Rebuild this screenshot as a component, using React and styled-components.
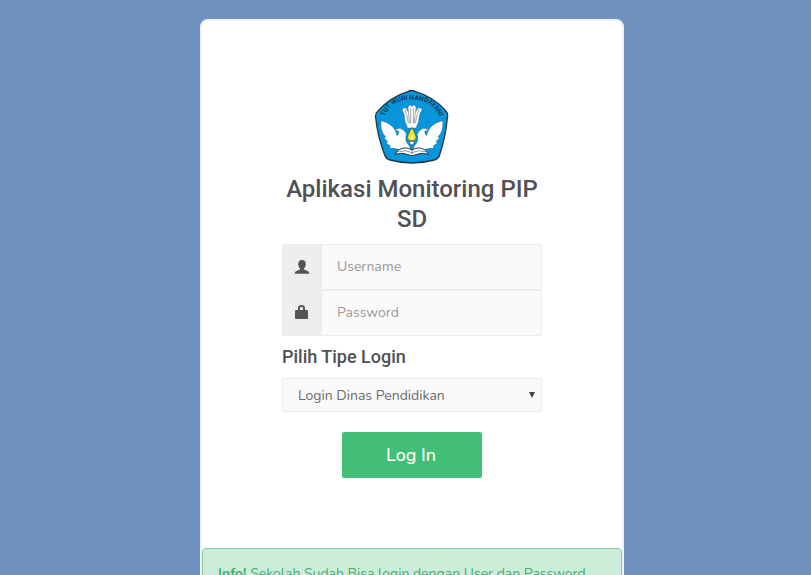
import React, { useState } from 'react';
import styled, { createGlobalStyle } from 'styled-components';

const GlobalStyle = createGlobalStyle`
  * {
    box-sizing: border-box;
  }

  body {
    margin: 0;
    background-color: #7092be;
    color: #4f5155;
    font-family: Nunito, Lato, "Open Sans", sans-serif;
    font-size: 14px;
  }
`;

const Page = styled.main`
  height: 100vh;
  overflow: hidden;
  padding: 19px 0 0 13px;
`;

const Card = styled.div`
  max-width: 424px;
  margin: 0 auto;
  background-color: #fff;
  border: 2px solid #eef3fb;
  border-radius: 8px;
`;

const LoginForm = styled.form`
  padding: 68px 80px 70px;
  display: flex;
  flex-direction: column;
`;

const LogoSvg = styled.svg`
  width: 76px;
  height: 76px;
  align-self: center;
`;

const Title = styled.h1`
  margin: 9px 0 10px;
  font-family: Roboto, sans-serif;
  font-size: 24px;
  font-weight: 500;
  line-height: 30px;
  text-align: center;
`;

const Field = styled.div`
  display: flex;
  height: 46px;
`;

const Addon = styled.label`
  display: flex;
  align-items: center;
  justify-content: center;
  width: 39px;
  background-color: #eee;
  color: #555;
`;

const Input = styled.input`
  flex: 1;
  min-width: 0;
  padding: 0 15px 1px;
  border: 1px solid #ececec;
  border-radius: 0 2px 2px 0;
  background-color: #fafafa;
  color: #666;
  font: inherit;

  &::placeholder {
    color: #999;
    opacity: 1;
  }
`;

const SelectLabel = styled.label`
  margin: 10px 0;
  font-family: Roboto, sans-serif;
  font-size: 18px;
  font-weight: 500;
  line-height: 22px;
`;

const SelectBox = styled.div`
  display: grid;
  align-items: center;

  & > * {
    grid-area: 1 / 1;
  }
`;

const Select = styled.select`
  appearance: none;
  height: 34px;
  padding: 0 24px 0 15px;
  border: 1px solid #ececec;
  border-radius: 2px;
  background-color: #fafafa;
  color: #6a6a6a;
  font: inherit;
`;

const Arrow = styled.svg`
  width: 6px;
  height: 6px;
  margin-right: 7px;
  justify-self: end;
  pointer-events: none;
`;

const SubmitButton = styled.button`
  align-self: center;
  width: 140px;
  height: 46px;
  margin-top: 20px;
  padding: 0 8px 0 6px;
  border: 0;
  border-radius: 2px;
  background-color: #43be78;
  color: #fff;
  font: inherit;
  font-size: 18px;
  font-weight: 500;
  cursor: pointer;
`;

const Alert = styled.div`
  padding: 15px;
  border: 1px solid #84cba2;
  border-radius: 4px;
  background-color: #cbedd9;
  color: #43b072;
  line-height: 20px;
`;

const Logo = () => (
  <LogoSvg viewBox="11 11 228 228" role="img" aria-label="Tut Wuri Handayani">
    <defs>
      <path id="motto" d="M39 103 Q58 43 124 43 Q190 43 211 103" />
    </defs>
    <path
      d="M112 19 Q124 12 136 19 Q188 34 226 76 Q234 84 231 98 Q226 156 207 211 Q203 221 192 224 Q125 242 59 224 Q48 221 44 211 Q22 155 16 97 Q14 84 23 77 Q60 35 112 19Z"
      fill="#0795dc"
      stroke="#263744"
      strokeWidth="4"
    />
    <text fill="#0c2c40" fontFamily="Roboto, sans-serif" fontSize="20" fontWeight="500">
      <textPath href="#motto" startOffset="50%" textAnchor="middle">TUT WURI HANDAYANI</textPath>
    </text>
    <g fill="#fff" stroke="#354954" strokeWidth="1" strokeLinejoin="round">
      <path d="M32 106 Q29 138 46 154 L42 159 52 168 48 174 60 181 58 188 Q84 189 99 198 L118 195 Q122 184 112 176 Q103 165 108 147 Q103 133 88 129 L72 133 86 138 Q86 147 80 151 Q74 116 32 106Z" />
      <path d="M217 106 Q220 138 203 154 L207 159 197 168 201 174 189 181 191 188 Q165 189 150 198 L131 195 Q127 184 137 176 Q146 165 141 147 Q146 133 161 129 L177 133 163 138 Q163 147 169 151 Q175 116 217 106Z" />
      <path d="M95 72 Q107 60 112 78 L112 68 Q118 53 125 64 Q132 53 138 68 L138 78 Q143 60 156 72 Q145 88 145 108 L137 128 H112 L104 108 Q104 88 95 72Z" />
    </g>
    <path d="M103 71 Q111 90 114 113 M113 67 L118 114 M121 67 V115 M129 67 V115 M137 67 L131 114 M147 71 Q138 90 135 113" fill="none" stroke="#77838a" strokeWidth="2" />
    <path d="M125 126 L116 143 Q109 155 113 163 Q124 171 136 163 Q140 155 133 143Z" fill="#f9e91e" stroke="#424b3b" strokeWidth="2" />
    <path d="M125 143 Q118 156 121 162 Q125 165 129 162 Q132 156 125 143Z" fill="#fff8a5" stroke="#b7a52a" strokeWidth="1" />
    <path d="M117 168 H132 L129 178 H120Z" fill="#fff" stroke="#354954" strokeWidth="2" />
    <path d="M125 194 Q105 182 86 193 L74 207 Q96 200 113 208 L125 211 137 208 Q154 200 175 207 L163 193 Q144 182 125 194Z" fill="#fff" stroke="#263744" strokeWidth="3" strokeLinejoin="round" />
    <path d="M85 199 Q105 192 125 202 Q145 192 165 199 M125 180 V206" fill="none" stroke="#536571" strokeWidth="2" />
  </LogoSvg>
);

const UserIcon = () => (
  <svg width="16" height="14" viewBox="0 0 16 14" fill="currentColor" aria-hidden="true">
    <path d="M8 0C5.3 0 4.2 1.6 4.3 3.7 4 4 4 4.8 4.5 5.4 4.7 7 5.4 7.8 6 8.5V9.5L2.5 11C1.2 11.5.8 12.1.8 13.8H15.2C15.2 12.1 14.8 11.5 13.5 11L10 9.5V8.5C10.6 7.8 11.3 7 11.5 5.4 12 4.8 12 4 11.7 3.7 11.8 1.6 10.7 0 8 0Z" />
  </svg>
);

const LockIcon = () => (
  <svg width="16" height="16" viewBox="0 0 16 16" fill="currentColor" aria-hidden="true">
    <path fillRule="evenodd" d="M4 5V3C4 1 5.3 0 7.5 0S11 1 11 3V5H13Q14 5 14 6V13Q14 14 13 14H2Q1 14 1 13V6Q1 5 2 5ZM6 5H9V3C9 2.3 8.5 2 7.5 2S6 2.3 6 3Z" />
  </svg>
);

const App = () => {
  const [username, setUsername] = useState('');
  const [password, setPassword] = useState('');

  return (
    <>
      <GlobalStyle />
      <Page>
        <Card>
          <LoginForm onSubmit={(e) => e.preventDefault()}>
            <Logo />
            <Title>Aplikasi Monitoring PIP SD</Title>
            <Field>
              <Addon htmlFor="username" aria-label="Username"><UserIcon /></Addon>
              <Input
                id="username"
                type="text"
                placeholder="Username"
                value={username}
                onChange={(e) => setUsername(e.target.value)}
              />
            </Field>
            <Field>
              <Addon htmlFor="password" aria-label="Password"><LockIcon /></Addon>
              <Input
                id="password"
                type="password"
                placeholder="Password"
                value={password}
                onChange={(e) => setPassword(e.target.value)}
              />
            </Field>
            <SelectLabel htmlFor="tipe">Pilih Tipe Login</SelectLabel>
            <SelectBox>
              <Select id="tipe">
                <option>Login Dinas Pendidikan</option>
              </Select>
              <Arrow viewBox="0 0 6 6" aria-hidden="true">
                <path d="M0 0H6L3 6Z" fill="#444" />
              </Arrow>
            </SelectBox>
            <SubmitButton type="submit">Log In</SubmitButton>
          </LoginForm>
          <Alert role="alert">
            <strong>Info!</strong> Sekolah Sudah Bisa login dengan User dan Password
          </Alert>
        </Card>
      </Page>
    </>
  );
};

export default App;
